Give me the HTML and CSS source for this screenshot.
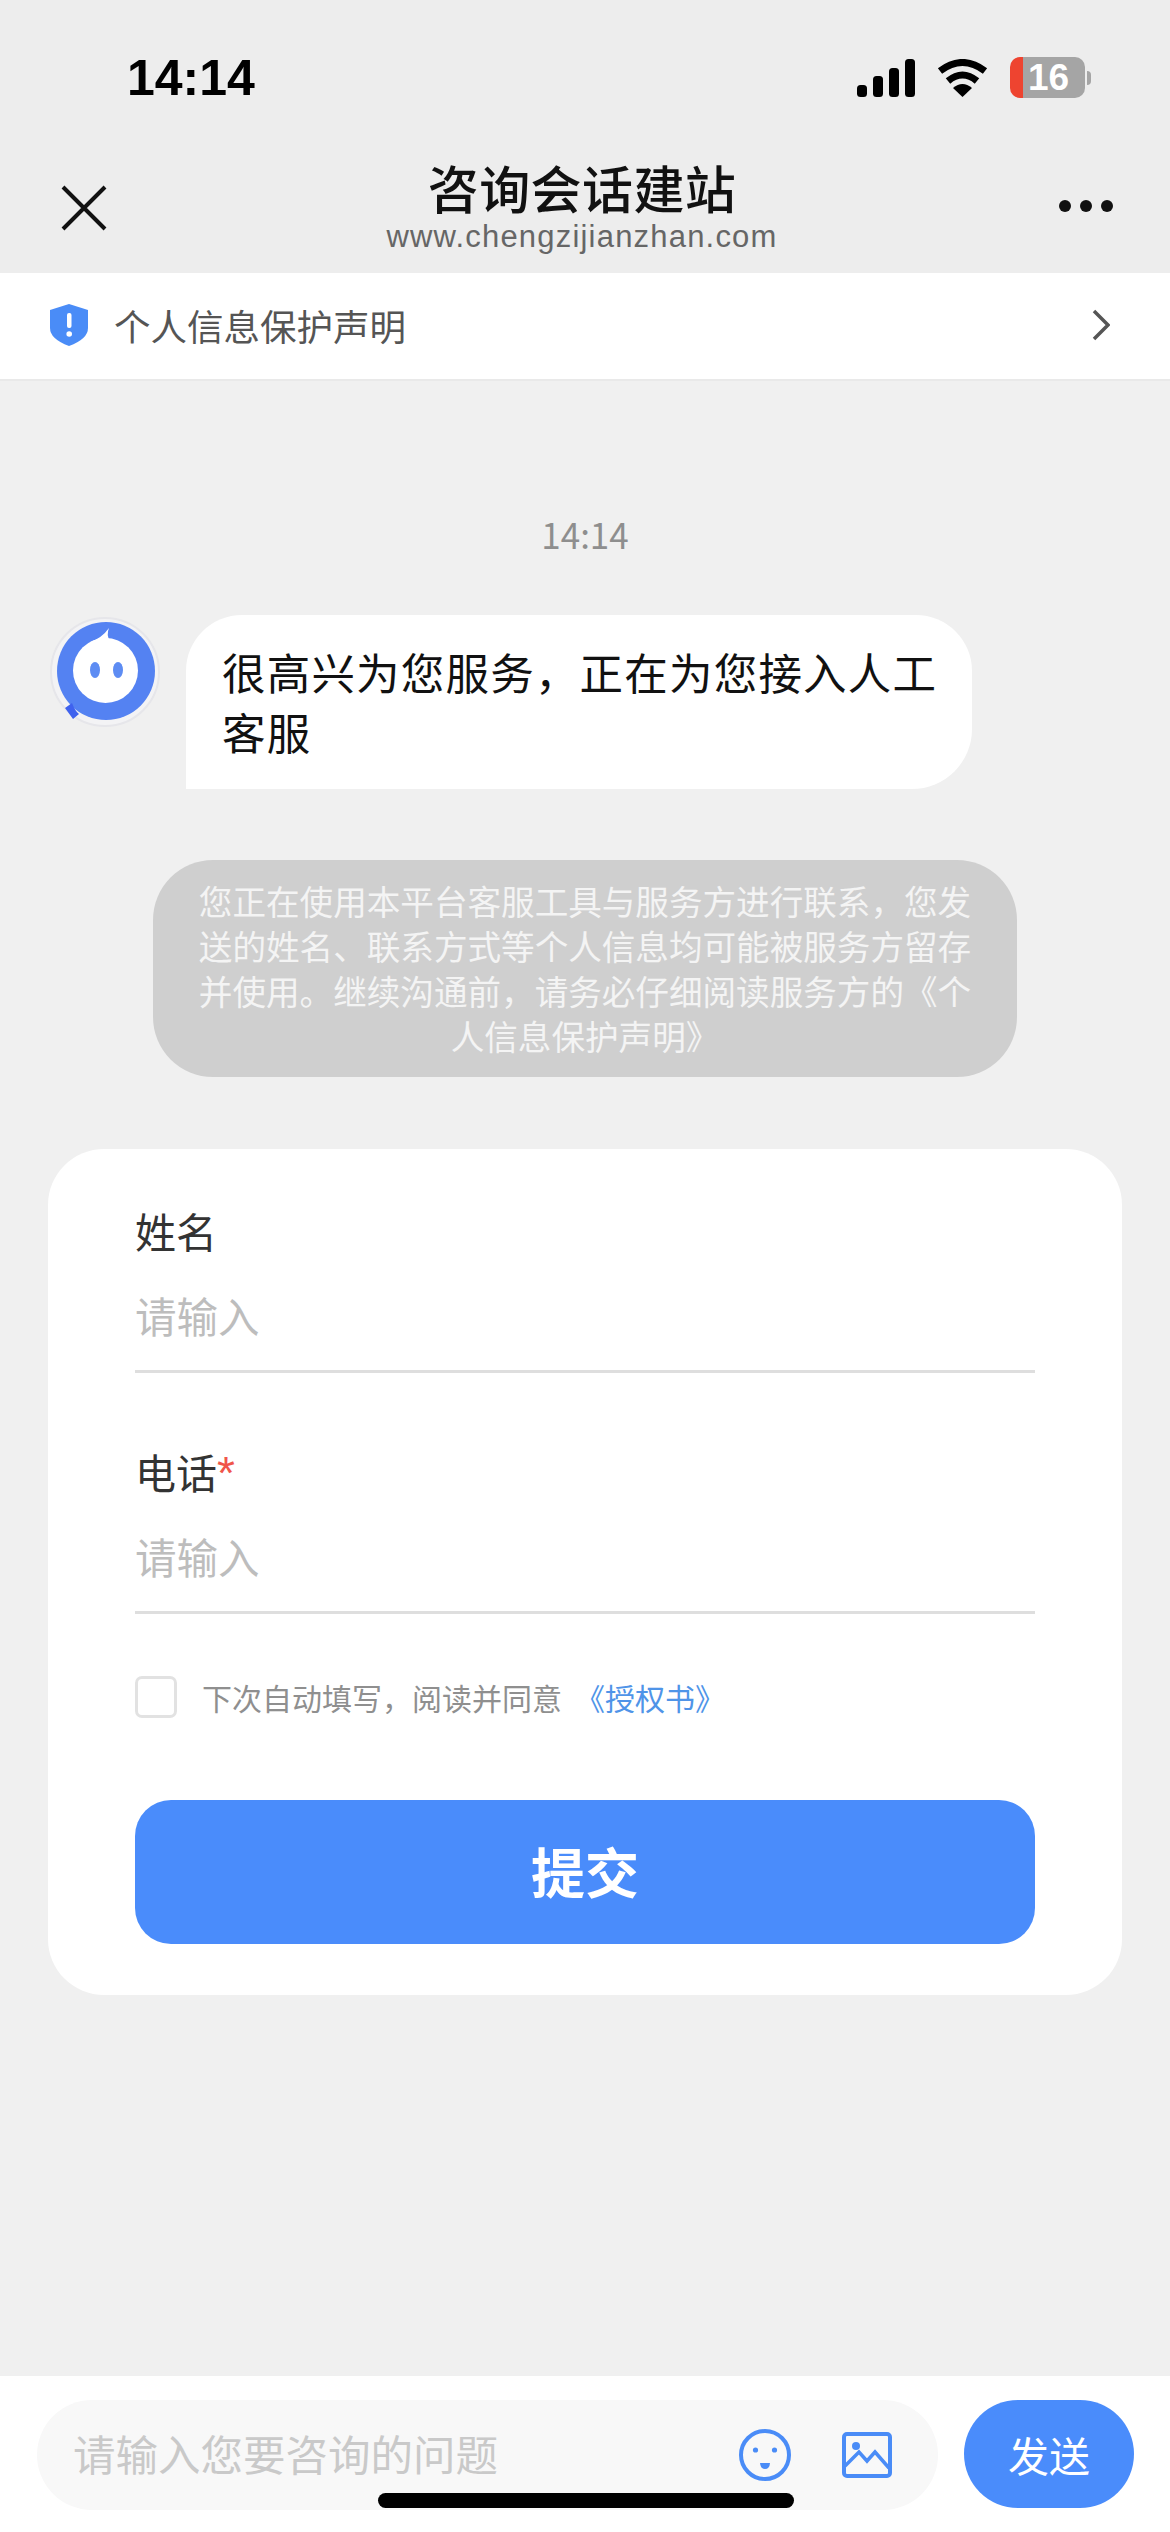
FILE: index.html
```html
<!DOCTYPE html>
<html lang="zh">

<head>
	<title>咨询会话建站</title>
	<link rel="stylesheet" href="styles.css">
</head>

<body>
	<div class="page">
		<div class="status-bar">
			<span class="clock">14:14</span>
			<div class="status-icons">
				<svg class="signal" viewBox="0 0 58 38">
					<rect x="0" y="26" width="10" height="12" rx="3.5"></rect>
					<rect x="16" y="17" width="10" height="21" rx="3.5"></rect>
					<rect x="32" y="9" width="10" height="29" rx="3.5"></rect>
					<rect x="48" y="0" width="10" height="38" rx="3.5"></rect>
				</svg>
				<svg class="wifi" viewBox="0 0 51 38">
					<path d="M3 12 Q25.5 -5 48 12" fill="none" stroke="#000" stroke-width="7"></path>
					<path d="M11 22 Q25.5 10 40 22" fill="none" stroke="#000" stroke-width="7"></path>
					<path d="M25.5 38 L16 29 Q25.5 21 35 29 Z"></path>
				</svg>
				<div class="battery"><span>16</span></div>
				<div class="battery-nub"></div>
			</div>
		</div>

		<div class="header">
			<svg class="close-icon" viewBox="0 0 46 46">
				<path d="M2 2 L44 44 M44 2 L2 44" fill="none" stroke="#111" stroke-width="4"></path>
			</svg>
			<div class="header-title">
				<h1>咨询会话建站</h1>
				<p>www.chengzijianzhan.com</p>
			</div>
			<div class="more-icon"><i></i><i></i><i></i></div>
		</div>

		<div class="notice-bar">
			<svg class="shield" viewBox="0 0 38 42">
				<path d="M19 0 L38 6 V24 Q38 35 19 42 Q0 35 0 24 V6 Z" fill="#4a8cf7"></path>
				<rect x="17" y="9" width="4.5" height="15" rx="2" fill="#fff"></rect>
				<circle cx="19.2" cy="30" r="2.8" fill="#fff"></circle>
			</svg>
			<span class="notice-text">个人信息保护声明</span>
			<svg class="chevron" viewBox="0 0 18 32">
				<path d="M2 2 L16 16 L2 30" fill="none" stroke="#555" stroke-width="3.5"></path>
			</svg>
		</div>

		<div class="chat">
			<div class="chat-time">14:14</div>

			<div class="message">
				<svg class="avatar" viewBox="0 0 110 110">
					<circle cx="55" cy="55" r="54" fill="#f3f3f5" stroke="#e6e6ea" stroke-width="2"></circle>
					<circle cx="56" cy="54" r="49" fill="#5482f2"></circle>
					<path d="M15 91 L22 86 Q25 94 29 97 L23 102 Z" fill="#3f62ee"></path>
					<circle cx="55.5" cy="53.5" r="32.5" fill="#fff"></circle>
					<path d="M40 25 Q52 21 59 11 Q56 18 60 24 Z" fill="#fff"></path>
					<ellipse cx="45" cy="53" rx="5" ry="8" fill="#5d8cf3"></ellipse>
					<ellipse cx="68" cy="53" rx="5" ry="8" fill="#5d8cf3"></ellipse>
				</svg>
				<div class="bubble">很高兴为您服务，正在为您接入人工客服</div>
			</div>

			<div class="tip">您正在使用本平台客服工具与服务方进行联系，您发送的姓名、联系方式等个人信息均可能被服务方留存并使用。继续沟通前，请务必仔细阅读服务方的《个人信息保护声明》</div>

			<div class="form-card">
				<div class="field">
					<div class="field-label">姓名</div>
					<div class="field-input">请输入</div>
				</div>
				<div class="field">
					<div class="field-label">电话<span class="required">*</span></div>
					<div class="field-input">请输入</div>
				</div>
				<div class="agree">
					<div class="checkbox"></div>
					<span>下次自动填写，阅读并同意</span>
					<a class="agree-link">《授权书》</a>
				</div>
				<button class="submit">提交</button>
			</div>
		</div>

		<div class="input-bar">
			<div class="input-box">
				<span class="input-hint">请输入您要咨询的问题</span>
				<svg class="emoji-icon" viewBox="0 0 52 52">
					<circle cx="26" cy="26" r="24" fill="none" stroke="#4a8cf7" stroke-width="4"></circle>
					<circle cx="16.5" cy="21" r="2.6" fill="#4a8cf7"></circle>
					<circle cx="35.5" cy="21" r="2.6" fill="#4a8cf7"></circle>
					<path d="M21 34 H31 Q30.5 40 26 40 Q21.5 40 21 34 Z" fill="#4a8cf7"></path>
				</svg>
				<svg class="image-icon" viewBox="0 0 50 46">
					<rect x="2" y="2" width="46" height="42" rx="3" fill="none" stroke="#4a8cf7" stroke-width="4"></rect>
					<circle cx="14" cy="14" r="4" fill="#4a8cf7"></circle>
					<path d="M3 34 L17 20 L25 29 L33 20 L47 36" fill="none" stroke="#4a8cf7" stroke-width="3.5"></path>
				</svg>
			</div>
			<button class="send">发送</button>
		</div>

		<div class="home-bar"></div>
	</div>
</body>

</html>
```

FILE: styles.css
```css
* {
	box-sizing: border-box;
}

body {
	margin: 0;
	font-family: "Noto Sans CJK SC", "Liberation Sans", sans-serif;
	background-color: #f0f0f0;
}

.page {
	position: relative;
	width: 1170px;
	height: 2532px;
	display: flex;
	flex-direction: column;
	overflow: hidden;
}

.status-bar {
	height: 150px;
	padding: 0 79px 0 127px;
	display: flex;
	justify-content: space-between;
	align-items: flex-start;
	background-color: #ededed;
}

.clock {
	margin-top: 48px;
	font-family: "Liberation Sans", sans-serif;
	font-size: 50px;
	line-height: 60px;
	font-weight: 700;
	color: #000;
}

.status-icons {
	margin-top: 57px;
	display: flex;
	align-items: center;
}

.signal {
	width: 58px;
	height: 38px;
	margin-right: 22px;
}

.wifi {
	width: 51px;
	height: 38px;
	margin-right: 22px;
}

.battery {
	width: 75px;
	height: 41px;
	border-radius: 10px;
	background: linear-gradient(to right, #ee4430 13px, #a5a5a5 13px);
	display: flex;
	justify-content: center;
	align-items: center;
	padding-left: 2px;
}

.battery span {
	font-family: "Liberation Sans", sans-serif;
	font-size: 37px;
	font-weight: 700;
	color: #fff;
}

.battery-nub {
	width: 4px;
	height: 14px;
	margin-left: 2px;
	border-radius: 0 4px 4px 0;
	background-color: #a5a5a5;
}

.header {
	height: 123px;
	padding: 0 57px 0 61px;
	display: flex;
	justify-content: space-between;
	align-items: center;
	background-color: #ededed;
}

.close-icon {
	width: 46px;
	height: 46px;
	margin-top: -8px;
}

.header-title {
	text-align: center;
	margin-top: -15px;
	margin-right: 2px;
}

.header-title h1 {
	margin: 0;
	font-size: 51px;
	line-height: 66px;
	letter-spacing: 0.4px;
	font-weight: 500;
	color: #111;
}

.header-title p {
	margin: 0;
	font-family: "Liberation Sans", sans-serif;
	font-size: 31px;
	line-height: 34px;
	letter-spacing: 1.2px;
	color: #666;
}

.more-icon {
	display: flex;
	gap: 9px;
	margin-top: -11px;
}

.more-icon i {
	width: 12px;
	height: 12px;
	border-radius: 50%;
	background-color: #111;
}

.notice-bar {
	height: 108px;
	padding: 0 64px 2px 50px;
	display: flex;
	align-items: center;
	background-color: #fff;
	border-bottom: 2px solid #e9e9e9;
}

.shield {
	width: 38px;
	height: 42px;
	margin-right: 26px;
}

.notice-text {
	flex: 1;
	font-size: 36.5px;
	color: #555;
}

.chevron {
	width: 18px;
	height: 32px;
	margin-right: -4px;
}

.chat {
	flex: 1;
	padding: 0 48px;
	display: flex;
	flex-direction: column;
}

.chat-time {
	margin-top: 131px;
	font-size: 35px;
	line-height: 44px;
	text-align: center;
	color: #8e8e8e;
}

.message {
	margin-top: 59px;
	display: flex;
	align-items: flex-start;
}

.avatar {
	width: 110px;
	height: 110px;
	margin: 2px 26px 0 2px;
}

.bubble {
	width: 786px;
	padding: 27px 30px 27px 36px;
	border-radius: 56px 56px 60px 0;
	background-color: #fff;
	font-size: 43.5px;
	line-height: 60px;
	letter-spacing: 1.2px;
	color: #111;
}

.tip {
	margin: 71px 105px 0;
	padding: 18px 45px 19px;
	border-radius: 60px;
	background-color: #cfcfcf;
	font-size: 33.6px;
	line-height: 45px;
	text-align: center;
	color: #f4f4f4;
}

.form-card {
	margin-top: 72px;
	height: 846px;
	padding: 52px 87px 0;
	border-radius: 56px;
	background-color: #fff;
}

.field {
	height: 172px;
	margin-bottom: 69px;
	border-bottom: 3px solid #dedede;
}

.field-label {
	font-size: 41px;
	line-height: 58px;
	color: #333;
}

.required {
	font-family: "Liberation Sans", sans-serif;
	font-size: 46px;
	line-height: 40px;
	color: #f0554a;
}

.field-input {
	margin-top: 27px;
	font-size: 41.5px;
	line-height: 58px;
	color: #bdbdbd;
}

.agree {
	margin-top: -8px;
	display: flex;
	align-items: center;
	font-size: 30px;
	color: #8f8f8f;
}

.checkbox {
	width: 42px;
	height: 42px;
	margin-right: 25px;
	border: 3px solid #e2e2e2;
	border-radius: 7px;
}

.agree-link {
	margin-left: 13px;
	color: #4f94e8;
}

.submit {
	width: 100%;
	height: 144px;
	margin-top: 81px;
	padding-bottom: 4px;
	border: none;
	border-radius: 36px;
	background-color: #4a8cfb;
	font-family: inherit;
	font-size: 54px;
	font-weight: 700;
	color: #fff;
}

.input-bar {
	height: 156px;
	padding: 24px 36px 24px 37px;
	display: flex;
	gap: 26px;
	background-color: #fff;
}

.input-box {
	flex: 1;
	height: 110px;
	padding: 0 46px 6px 36px;
	display: flex;
	align-items: center;
	border-radius: 55px;
	background-color: #f8f8f8;
}

.input-hint {
	flex: 1;
	font-size: 42.5px;
	color: #c9c9c9;
}

.emoji-icon {
	width: 52px;
	height: 52px;
	margin: 6px 51px 0 0;
}

.image-icon {
	width: 50px;
	height: 46px;
	margin-top: 6px;
}

.send {
	width: 170px;
	height: 108px;
	border: none;
	border-radius: 54px;
	background-color: #4a8cfb;
	font-family: inherit;
	font-size: 41px;
	color: #fff;
}

.home-bar {
	position: absolute;
	left: 378px;
	bottom: 24px;
	width: 416px;
	height: 15px;
	border-radius: 8px;
	background-color: #000;
}
```
